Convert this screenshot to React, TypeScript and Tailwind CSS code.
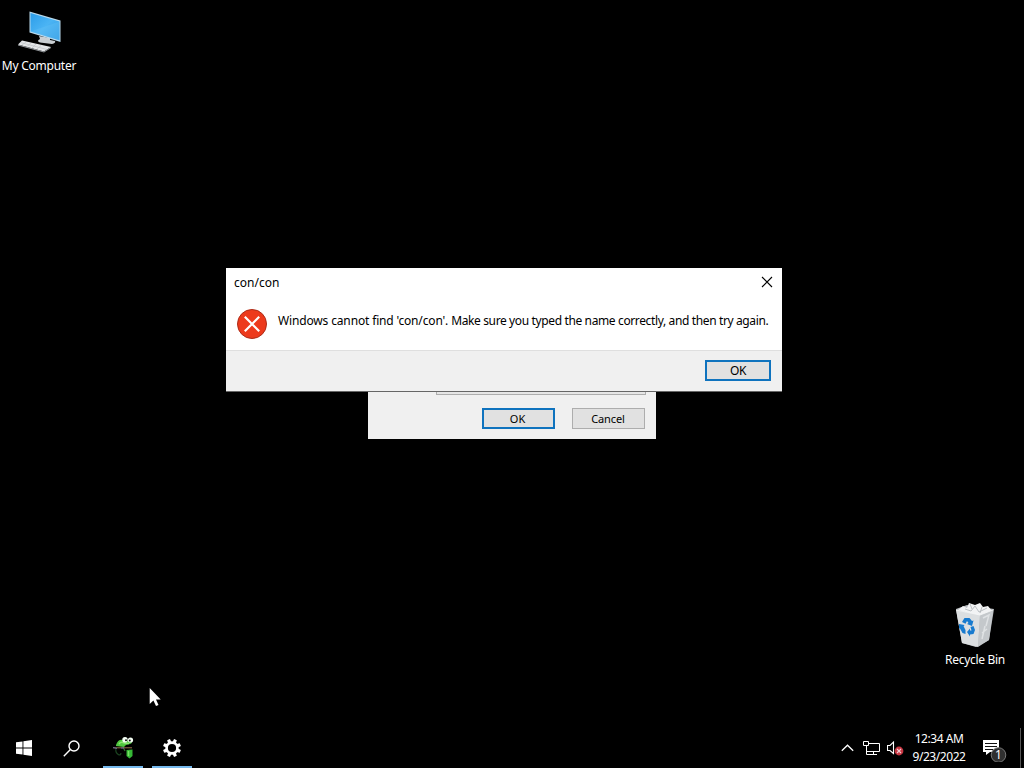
import type { ReactNode } from 'react';

function ComputerIcon() {
  return (
    <svg width="46" height="44" viewBox="0 0 46 44">
      <defs>
        <linearGradient id="screen" x1="0" y1="0" x2="1" y2="1">
          <stop offset="0" stopColor="#2b9ce8" />
          <stop offset="0.5" stopColor="#4bb4f4" />
          <stop offset="1" stopColor="#2d97e2" />
        </linearGradient>
      </defs>
      <path d="M23 26 L34 28 L34 30 L39 31 Q40 33 36 34 L24 32.5 Q20 31 24 29Z" fill="#c9ced2" />
      <path d="M13.5 1.5 L44.5 10.5 L44.5 32 L13.5 22.5Z" fill="#b9d9ec" />
      <path d="M14.5 3 L43.5 11.5 L43.5 30.3 L14.5 21.6Z" fill="url(#screen)" />
      <path d="M14.5 21.6 L43.5 11.5 L43.5 30.3Z" fill="#68c2f7" opacity="0.35" />
      <path d="M6 30.5 L35 37 L28 41.5 L2 34.5Z" fill="#e4e6e8" />
      <path d="M2 34.5 L28 41.5 L35 37 L35 38 L28 42.5 L2 35.5Z" fill="#92979b" />
      <path d="M4.5 32.5 L31 39.5 M10 32 L6 35 M15 33 L11 36.5 M20 34 L16 38 M25 35.5 L21 39" stroke="#b9bdc1" strokeWidth="0.6" />
    </svg>
  );
}

function RecycleBinIcon() {
  return (
    <svg width="42" height="46" viewBox="0 0 42 46">
      <path d="M2 8 L13 4 L40 8 L35 39 L22 46 L8 42Z" fill="#b8bcc0" />
      <path d="M4 9 L9 5 L13 7 L15 2 L21 4 L26 2 L29 6 L34 5 L38 10 L27 15Z" fill="#f2f3f4" />
      <path d="M11 8 L17 10 L21 5 L25 11 L33 7 M16 3 L18 8 M28 6 L26 12" stroke="#b5babd" strokeWidth="0.9" fill="none" />
      <path d="M2 9 L26 14 L24 46 L8 42Z" fill="#dcdfe1" />
      <path d="M26 14 L39 9 L35 39 L24 46Z" fill="#c4c8cb" />
      <path d="M29 17 L35 14 L32 25 M28 32 L33 28 M28 38 L31 25" stroke="#dfe2e4" strokeWidth="1.5" fill="none" />
      <path d="M2 9 L26 14 L39 9" stroke="#f6f7f8" strokeWidth="0.8" fill="none" />
      <g fill="#187bcf">
        <path d="M8 21 L10.5 17 L15.5 17 L18 20 L19.5 19.5 L18 25 L13 23 L14.5 22 L13 20 L11.5 22.8Z" />
        <path d="M5 23 L10.5 24 L9.6 25.3 L11.5 29 L11.5 33 L8.5 32 L6 27.5 L5 27.5Z" />
        <path d="M13 31 L16 27.5 L16 29.5 L17.5 29.5 L16.5 26 L19.5 25 L21 29 L19.5 33 L16 33.5 L16 35.5Z" />
      </g>
    </svg>
  );
}

function ChameleonIcon() {
  return (
    <svg width="22" height="24" viewBox="0 0 22 24">
      <path d="M4 12 Q3 17 7 19 Q9 19 9 17" stroke="#1c4521" strokeWidth="1.1" fill="none" />
      <path d="M4 9 Q6 3 11 4 L19 5 Q21 7 18 8 L14 9 L12 11 L4 10Z" fill="#4fc63f" />
      <path d="M7 8 Q9 5 12 7 L17 7.5" stroke="#8ae66f" strokeWidth="1.4" fill="none" />
      <path d="M11 11 L13 15" stroke="#2f702c" strokeWidth="1.3" />
      <path d="M1 11.8 H20" stroke="#94704b" strokeWidth="1" />
      <path d="M1 11.5 L5 12.5 M9 12 H12" stroke="#6369a6" strokeWidth="0.9" />
      <path d="M14.5 14 L20.5 13.5 L20.5 20 L17.5 22.5 L14.5 20Z" fill="#35b835" />
      <path d="M16.5 15 V20" stroke="#79df64" strokeWidth="1.5" />
      <ellipse cx="13" cy="3.8" rx="2.7" ry="2.8" fill="#f5fff4" />
      <ellipse cx="18.5" cy="4" rx="2.6" ry="2.6" fill="#f5fff4" />
      <circle cx="14" cy="4.2" r="1" fill="#101510" />
      <circle cx="17.8" cy="4.5" r="1" fill="#101510" />
    </svg>
  );
}

function GearIcon() {
  return (
    <svg width="20" height="20" viewBox="0 0 20 20">
      <circle cx="10" cy="10" r="5.4" fill="none" stroke="#fff" strokeWidth="2.6" />
      {[0, 45, 90, 135, 180, 225, 270, 315].map((a) => (
        <path key={a} d="M8.2 4.2 L8.5 1 H11.5 L11.8 4.2Z" fill="#fff" transform={`rotate(${a + 22.5} 10 10)`} />
      ))}
    </svg>
  );
}

function Label({ children, className }: { children: ReactNode; className: string }) {
  return <span className={`whitespace-nowrap ${className}`}>{children}</span>;
}

function Taskbar() {
  return (
    <footer className="flex h-10 items-stretch justify-between bg-black text-white">
      <div className="flex">
        <div className="flex w-12 items-center justify-center">
          <svg width="16" height="16" viewBox="0 0 16 16" fill="#fff">
            <path d="M0 2.3 L6.5 1.4 V7.5 H0Z M7.4 1.3 L16 0 V7.5 H7.4Z M0 8.4 H6.5 V14.6 L0 13.7Z M7.4 8.4 H16 V16 L7.4 14.7Z" />
          </svg>
        </div>
        <div className="flex w-12 items-center justify-center pr-px">
          <svg width="17" height="17" viewBox="0 0 17 17" fill="none" stroke="#fff" strokeWidth="1.4">
            <circle cx="11" cy="6" r="5" />
            <path d="M7.4 9.6 L0.8 16.2" />
          </svg>
        </div>
        <div className="ml-[7px] flex w-10 items-center justify-center border-b-2 border-[#76b9ed] pt-0.5">
          <ChameleonIcon />
        </div>
        <div className="ml-[9px] flex w-10 items-center justify-center border-b-2 border-[#76b9ed] pt-0.5">
          <GearIcon />
        </div>
      </div>
      <div className="flex items-center">
        <svg width="13" height="8" viewBox="0 0 13 8" fill="none" stroke="#fff" strokeWidth="1.3">
          <path d="M0.8 6.8 L6.5 1.2 L12.2 6.8" />
        </svg>
        <svg className="ml-[9px]" width="17" height="16" viewBox="0 0 17 16" fill="none" stroke="#fff">
          <path d="M6 3.5 H16.5 V11.5 H3.5 V6 M10.5 11.5 V14.5 M6.5 14.5 H14 M0.5 1.5 H5.5 V5.5 H0.5Z M3.5 5.5 V14.5 H7" />
        </svg>
        <svg className="ml-[7px]" width="17" height="16" viewBox="0 0 17 16" fill="none">
          <path d="M0.5 5.5 H3 L6.5 2 V13.5 L3 10.5 H0.5Z" stroke="#fff" strokeWidth="1.1" />
          <circle cx="12" cy="11" r="4.4" fill="#c83743" />
          <path d="M10 9 L14 13 M14 9 L10 13" stroke="#f3cbd0" strokeWidth="1.1" />
        </svg>
        <div className="ml-2 flex w-[54px] flex-col items-center text-[12px] leading-[18px]">
          <Label className="tracking-[-0.45px]">12:34 AM</Label>
          <Label className="tracking-[-0.45px]">9/23/2022</Label>
        </div>
        <div className="relative ml-4 h-7 w-[26px]">
          <svg width="26" height="28" viewBox="0 0 26 28">
            <path d="M1 6 H17 V18 H8 L4 21 V18 H1Z" fill="#fff" />
            <path d="M3 9.5 H15 M3 12.5 H15 M3 15.5 H11" stroke="#111" strokeWidth="1" />
            <circle cx="16.5" cy="21" r="7.3" fill="#303030" stroke="#777" />
          </svg>
          <span className="absolute left-[9px] top-[13px] flex h-4 w-[15px] items-center justify-center leading-4">1</span>
        </div>
        <div className="ml-3 mr-[3px] h-10 w-px bg-[#555]" />
      </div>
    </footer>
  );
}

export default function App() {
  return (
    <div className="relative flex h-[768px] w-[1024px] flex-col overflow-hidden bg-black font-['Noto_Sans','Open_Sans',sans-serif] text-[12px] text-black">
      <main className="relative flex-1">
        <div className="absolute left-0 top-[10px] flex w-[78px] flex-col items-center text-white">
          <ComputerIcon />
          <Label className="mt-[3px] leading-[18px] tracking-[-0.25px]">My Computer</Label>
        </div>
        <div className="absolute left-[936px] top-[601px] flex w-[78px] flex-col items-center text-white">
          <RecycleBinIcon />
          <Label className="mt-1 leading-[18px] tracking-[-0.3px]">Recycle Bin</Label>
        </div>

        <section className="absolute left-[368px] top-[270px] flex h-[169px] w-[288px] flex-col justify-end bg-[#f0f0f0] pb-[10px]">
          <div className="ml-[68px] h-6 w-[210px] border border-[#adadad] bg-[#e6e6e6]" />
          <div className="mt-[13px] flex justify-end gap-[17px] pr-[11px]">
            <button className="flex h-[21px] w-[73px] items-center justify-center border-2 border-[#0f73be] bg-[#e1e1e1] pr-0.5 pt-0.5 text-[11px]">OK</button>
            <button className="flex h-[21px] w-[73px] items-center justify-center border border-[#adadad] bg-[#e1e1e1] pr-px pt-0.5 text-[11px] tracking-[-0.1px]">Cancel</button>
          </div>
        </section>

        <section className="absolute left-[226px] top-[268px] flex h-[124px] w-[556px] flex-col border-b border-[#666] bg-white">
          <header className="flex h-[30px] items-center justify-between pl-2 pr-[9px]">
            <Label className="">con/con</Label>
            <svg className="mb-[2px]" width="12" height="12" viewBox="0 0 12 12" stroke="#000" strokeWidth="1.1">
              <path d="M1 1 L11 11 M11 1 L1 11" />
            </svg>
          </header>
          <div className="flex h-[52px] pl-[10px]">
            <svg className="mt-[10px]" width="32" height="32" viewBox="0 0 32 32">
              <circle cx="16" cy="16" r="14.5" fill="#ed3a1c" stroke="#ad2c18" />
              <path d="M8.8 8.8 L23.2 23.2 M23.2 8.8 L8.8 23.2" stroke="#fff" strokeWidth="2.2" />
            </svg>
            <p className="ml-[10px] mt-[14px] whitespace-nowrap leading-[18px]">
              <span className="tracking-[-0.15px]">Windows cannot find 'con/con'. </span>
              <span className="tracking-[-0.37px]">Make sure you typed the name correctly, and then try again.</span>
            </p>
          </div>
          <div className="flex flex-1 items-start justify-end border-t border-[#dfdfdf] bg-[#f0f0f0] pr-[11px] pt-[9px]">
            <button className="flex h-[21px] w-[66px] items-center justify-center border-2 border-[#0f73be] bg-[#e1e1e1] text-[12px] tracking-[-0.3px]">OK</button>
          </div>
        </section>

        <svg className="absolute left-[149px] top-[687px]" width="12" height="20" viewBox="0 0 12 20">
          <path d="M0.7 1 V17 L4.4 13.6 L7 19 L9.5 18 L7 12.5 H11.7Z" fill="#fff" />
        </svg>
      </main>
      <Taskbar />
    </div>
  );
}
